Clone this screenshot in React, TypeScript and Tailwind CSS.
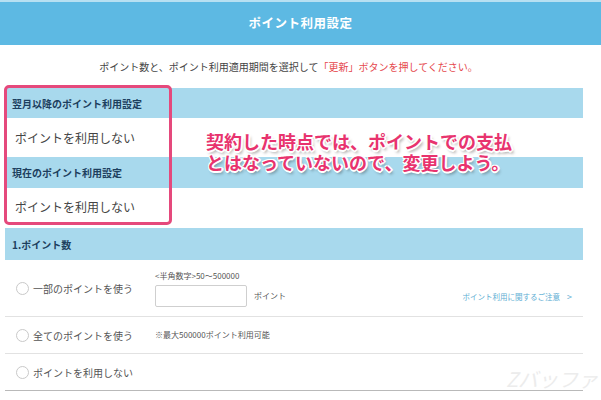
import React from "react";

const font = { fontFamily: '"Noto Sans CJK JP", "Noto Sans", sans-serif' };

const Radio = () => (
  <span className="w-[13px] h-[13px] rounded-full border border-[#c9c9c9] bg-white shrink-0" />
);

const Bar = ({ children }: { children: React.ReactNode }) => (
  <div className="flex items-center bg-[#a8d9ed] pl-[7px] text-[10px] font-bold text-[#1d3f5e]">
    {children}
  </div>
);

const App = () => {
  return (
    <div
      className="relative w-[601px] h-[400px] overflow-hidden bg-white text-[#555]"
      style={font}
    >
      {/* Header */}
      <div className="h-[45px] border-t-2 border-[#b7e0f2] bg-[#5db9e3] flex items-center justify-center">
        <span className="text-[12.5px] font-bold text-white tracking-[0.5px]">ポイント利用設定</span>
      </div>

      {/* Lead */}
      <div className="h-[43px] flex items-center justify-center pr-[24px] text-[10px] text-[#444]">
        ポイント数と、ポイント利用適用期間を選択して
        <span className="text-[#e5484d]">「更新」ボタンを押してください。</span>
      </div>

      <div className="w-[578px] ml-[5px]">
        {/* Current settings */}
        <Bar>
          <div className="h-[30px] flex items-center">翌月以降のポイント利用設定</div>
        </Bar>
        <div className="h-[39px] flex items-center pl-[10px] text-[12px] text-[#444]">
          ポイントを利用しない
        </div>
        <Bar>
          <div className="h-[31px] flex items-center">現在のポイント利用設定</div>
        </Bar>
        <div className="h-[38px] flex items-center pl-[10px] text-[12px] text-[#444]">
          ポイントを利用しない
        </div>

        <div className="h-[2px]" />

        {/* Point count */}
        <Bar>
          <div className="h-[32px] flex items-center">1.ポイント数</div>
        </Bar>

        <div className="h-[57px] flex border-b border-[#e2e2e2]">
          <div className="w-[150px] flex items-center gap-[4px] pl-[11px] text-[10px]">
            <Radio />
            一部のポイントを使う
          </div>
          <div className="flex flex-col pt-[10px]">
            <span className="text-[8px] leading-[12px] text-[#555]">&lt;半角数字&gt;50～500000</span>
            <div className="flex items-center mt-[3px]">
              <div className="w-[92px] h-[22px] border border-[#cfcfcf] rounded-[2px] bg-white" />
              <span className="ml-[7px] text-[8px] text-[#555]">ポイント</span>
            </div>
          </div>
          <div className="ml-auto self-end mb-[13px] mr-[11px] flex items-center gap-[7px] text-[7.5px] text-[#5eaed3]">
            ポイント利用に関するご注意
            <span className="text-[9px]">&gt;</span>
          </div>
        </div>

        <div className="h-[37px] flex items-center border-b border-[#e2e2e2]">
          <div className="w-[150px] flex items-center gap-[4px] pl-[11px] text-[10px]">
            <Radio />
            全てのポイントを使う
          </div>
          <span className="text-[8px] text-[#555]">※最大500000ポイント利用可能</span>
        </div>

        <div className="h-[37px] flex items-center border-b border-[#b9b9b9]">
          <div className="w-[150px] flex items-center gap-[4px] pl-[11px] text-[10px]">
            <Radio />
            ポイントを利用しない
          </div>
        </div>
      </div>

      {/* Annotation box */}
      <div className="absolute left-[4px] top-[85px] w-[168px] h-[140px] rounded-[5px] border-[3px] border-[#e5497c]" />

      {/* Annotation text */}
      <div
        className="absolute left-[206px] top-[130px] text-[18px] leading-[22px] font-bold text-[#e8336e]"
        style={{
          textShadow:
            "1px 1px 0 #fff, -1px -1px 0 #fff, 1px -1px 0 #fff, -1px 1px 0 #fff, 0 2px 0 #fff, 2px 0 0 #fff, 2px 3px 3px rgba(0,0,0,0.35)",
        }}
      >
        <div>契約した時点では、ポイントでの支払</div>
        <div className="-mt-[1px]">とはなっていないので、変更しよう。</div>
      </div>

      {/* Watermark */}
      <div className="absolute left-[506px] top-[366px] text-[20px] leading-[26px] italic text-[#ececec]">
        Zバッファ
      </div>
    </div>
  );
};

export default App;
